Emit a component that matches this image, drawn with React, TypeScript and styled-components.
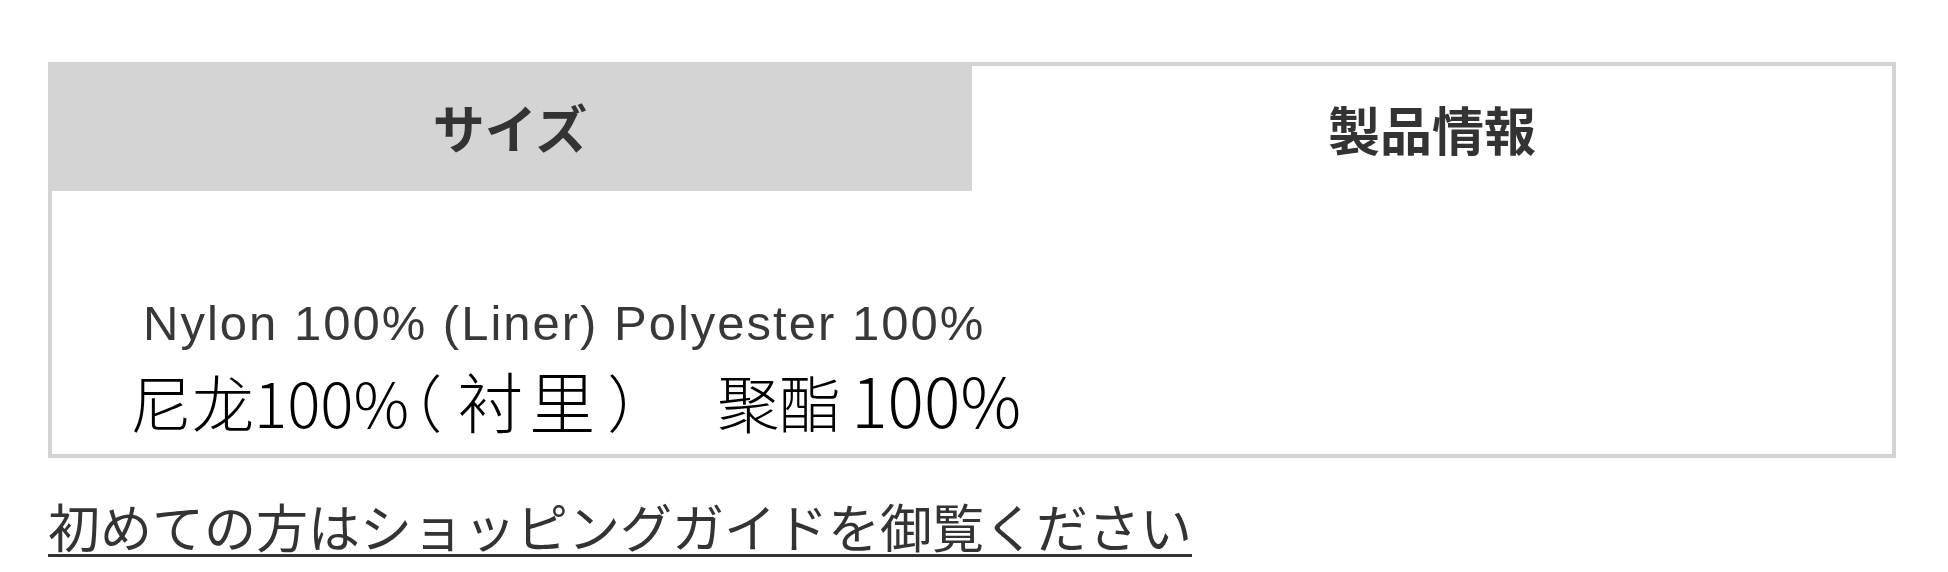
import React, { useState } from 'react'
import styled, { createGlobalStyle } from 'styled-components'

const GlobalStyle = createGlobalStyle`
  html, body {
    margin: 0;
    padding: 0;
    background: #ffffff;
  }
  body {
    font-family: 'Noto Sans CJK JP', 'Noto Sans', sans-serif;
    color: #333;
  }
`

const Page = styled.div`
  padding: 62px 52px 0 48px;
`

const TabBox = styled.section`
  width: 1848px;
  box-sizing: border-box;
  border: 4px solid #d4d4d4;
`

const TabList = styled.div`
  display: grid;
  grid-template-columns: 1fr 1fr;
  height: 125px;
  margin: -4px -4px 0 -4px;
  padding: 4px 4px 0 4px;
`

const Tab = styled.button<{ $active: boolean }>`
  display: flex;
  align-items: center;
  justify-content: center;
  border: none;
  padding: 0;
  margin: ${(p) => (p.$active ? '0' : '-4px 0 0 -4px')};
  background: ${(p) => (p.$active ? '#ffffff' : '#d4d4d4')};
  font-family: 'Noto Sans CJK JP', sans-serif;
  font-size: 52px;
  font-weight: 700;
  color: #333;
  cursor: pointer;
`

const Panel = styled.div`
  height: 263px;
  box-sizing: border-box;
  padding-top: 102px;
`

const EnglishLine = styled.p`
  margin: 0 0 6px 91px;
  font-family: 'Liberation Sans', Arial, sans-serif;
  font-size: 49px;
  line-height: 60px;
  letter-spacing: 2px;
  color: #383838;
`

const ChineseLine = styled.p`
  margin: 0 0 0 78px;
  font-family: 'Noto Sans CJK SC', 'Noto Sans CJK JP', sans-serif;
  font-size: 62px;
  font-weight: 300;
  line-height: 80px;
  color: #000;
  white-space: pre;
`

const Paren = styled.span<{ $left?: number }>`
  margin-left: ${(p) => p.$left ?? 0}px;
  font-feature-settings: 'halt';
`

const Spaced = styled.span<{ $left: number; $size?: number; $tracking?: number }>`
  margin-left: ${(p) => p.$left}px;
  font-size: ${(p) => p.$size ?? 62}px;
  letter-spacing: ${(p) => p.$tracking ?? 0}px;
`

const GuideLink = styled.a`
  display: inline-block;
  margin-top: 30px;
  font-family: 'Noto Sans CJK JP', sans-serif;
  font-size: 52px;
  font-weight: 400;
  color: #333;
  text-decoration: underline;
  text-decoration-thickness: 3px;
  text-underline-offset: 6px;
`

const tabs = ['サイズ', '製品情報']

const App: React.FC = () => {
  const [active, setActive] = useState(1)

  return (
    <Page>
      <GlobalStyle />
      <TabBox>
        <TabList>
          {tabs.map((label, i) => (
            <Tab key={label} $active={active === i} onClick={() => setActive(i)}>
              {label}
            </Tab>
          ))}
        </TabList>
        <Panel>
          <EnglishLine>Nylon 100% (Liner) Polyester 100%</EnglishLine>
          <ChineseLine>
            尼龙100%
            <Paren $left={2}>（</Paren>
            <Spaced $left={15} $size={66} $tracking={6}>衬里</Spaced>
            <Paren $left={6}>）</Paren>
            <Spaced $left={79}>聚酯</Spaced>
            <Spaced $left={10} $size={68}>100%</Spaced>
          </ChineseLine>
        </Panel>
      </TabBox>
      <GuideLink href="#guide">初めての方はショッピングガイドを御覧ください</GuideLink>
    </Page>
  )
}

export default App
